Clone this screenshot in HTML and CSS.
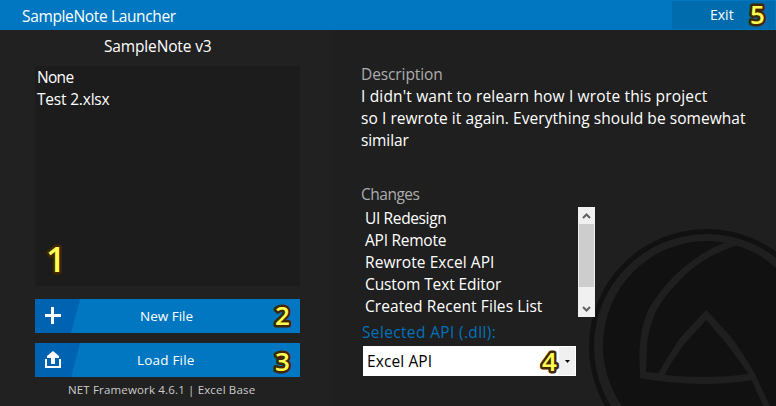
FILE: index.html
```html
<!DOCTYPE html>
<html lang="en">
<head>
<meta charset="utf-8">
<title>SampleNote Launcher</title>
<link rel="stylesheet" href="styles.css">
</head>
<body>
<div class="window">
  <header class="titlebar">
    <div class="title"><span class="t-title">SampleNote Launcher</span></div>
    <div class="exit"><span class="t-exit">Exit</span><svg class="mark mark5" width="24" height="32"><text x="3" y="24">5</text></svg></div>
  </header>
  <main class="body">
    <section class="left">
      <h1><span class="t-head">SampleNote v3</span></h1>
      <div class="files">
        <div><span class="t-none">None</span></div>
        <div><span class="t-test">Test 2.xlsx</span></div>
        <svg class="mark mark1" width="24" height="32"><text x="3" y="24">1</text></svg>
      </div>
      <div class="button">
        <svg class="face" width="45" height="34" viewBox="0 0 45 34"><path fill="#0063b1" d="M0 0H45L36 34H0Z"/><path fill="#fff" d="M16 8h3v7h7v3h-7v7h-3v-7h-6v-3h6z"/></svg>
        <span class="t-new">New File</span>
        <svg class="mark mark2" width="24" height="32"><text x="3" y="24">2</text></svg>
      </div>
      <div class="button">
        <svg class="face" width="45" height="34" viewBox="0 0 45 34"><path fill="#0063b1" d="M0 0H45L36 34H0Z"/><path fill="#fff" d="M10 16h2v7h12v-7h2v9H10zM18 8l6 5v2h-4v6h-4v-6h-4v-2z"/></svg>
        <span class="t-load">Load File</span>
        <svg class="mark mark3" width="24" height="32"><text x="3" y="24">3</text></svg>
      </div>
      <footer><span class="t-foot">NET Framework 4.6.1 | Excel Base</span></footer>
    </section>
    <section class="right">
      <svg class="emblem" width="206" height="196" viewBox="0 0 618 588">
        <g fill="#111">
          <path fill-rule="evenodd" d="M57 410a353 353 0 1 0 706 0a353 353 0 1 0-706 0zM72 410a338 338 0 1 0 676 0a338 338 0 1 0-676 0z"/>
          <ellipse cx="410" cy="407" rx="311" ry="314"/>
        </g>
        <g fill="#1f1f1f">
          <path d="M465 97Q430 112 400 130Q335 170 290 222Q250 270 235 300Q210 355 208 430L210 505Q310 522 400 522Q480 522 545 511L580 588H600L555 492Q520 430 480 377L409 299L330 385Q300 428 265 490L228 486Q230 430 232 390Q240 345 260 300Q285 255 320 222Q355 180 400 152Q440 127 505 104L490 82zM283 495Q310 447 340 405L409 330L460 390Q503 443 535 492Q470 501 400 501Q340 501 283 495z"/>
        </g>
      </svg>
      <h2><span class="t-desc">Description</span></h2>
      <div class="description">
        <div><span class="t-d1">I didn't want to relearn how I wrote this project</span></div>
        <div><span class="t-d2">so I rewrote it again. Everything should be somewhat</span></div>
        <div><span class="t-d3">similar</span></div>
      </div>
      <h2><span class="t-chg">Changes</span></h2>
      <div class="changes">
        <div class="rows">
          <div><span class="t-c1">UI Redesign</span></div>
          <div><span class="t-c2">API Remote</span></div>
          <div><span class="t-c3">Rewrote Excel API</span></div>
          <div><span class="t-c4">Custom Text Editor</span></div>
          <div><span class="t-c5">Created Recent Files List</span></div>
        </div>
        <div class="scrollbar">
          <svg width="17" height="17"><path d="M5 11L8.5 7.5L12 11" fill="none" stroke="#606060" stroke-width="2"/></svg>
          <div class="thumb"></div>
          <svg width="17" height="17"><path d="M5 7L8.5 10.5L12 7" fill="none" stroke="#606060" stroke-width="2"/></svg>
        </div>
      </div>
      <div class="label"><span class="t-sel">Selected API (.dll):</span></div>
      <div class="select">
        <span class="t-api">Excel API</span>
        <div class="drop"><svg width="5" height="3"><path d="M0 0H5L2.5 3Z"/></svg></div>
        <svg class="mark mark4" width="24" height="32"><text x="3" y="24">4</text></svg>
      </div>
    </section>
  </main>
</div>
</body>
</html>
```
FILE: styles.css
```css
* { box-sizing: border-box; }
body { margin: 0; overflow: hidden; background: #1f1f1f; }
.window {
  width: 776px; height: 406px; display: flex; flex-direction: column;
  color: #fff; font: 15.5px/22px "Open Sans", "Noto Sans", sans-serif;
}
span { display: inline-block; white-space: nowrap; }
h1, h2 { margin: 0; font-size: inherit; font-weight: 400; }
.titlebar { height: 30px; flex: none; display: flex; justify-content: space-between; background: #0077c0; }
.title { padding: 5px 0 0 22px; }
.exit { position: relative; width: 103px; height: 28px; margin: 1px 1px 0 0; padding: 3px 0 0 38px; background: #006cae; font-size: 14px; }
.body { flex: 1; display: flex; min-height: 0; }
.left { width: 332px; padding: 5px 32px 0 35px; background: #212121; }
.left h1 { height: 31px; padding-left: 69px; }
.files { position: relative; height: 220px; padding: 0 0 0 2px; background: #1c1c1c; }
.button { position: relative; display: flex; align-items: center; height: 34px; margin-top: 13px; width: 265px; background: #0077c0; font-size: 13.5px; }
.button + .button { margin-top: 10px; }
.face { flex: none; }
.t-new { margin-left: 60px; }
.t-load { margin-left: 57px; letter-spacing: .2px; }
footer { padding: 2px 0 0 33px; font-size: 11.5px; color: #ccc; }
.right { position: relative; flex: 1; padding: 33px 0 0 29px; }
.emblem { position: absolute; right: 0; bottom: 0; }
.right h2 { position: relative; height: 22px; color: #adadad; }
.description { height: 98px; }
.changes { position: relative; display: flex; justify-content: space-between; width: 234px; height: 110px; margin-top: 2px; padding-left: 4px; }
.scrollbar { width: 17px; height: 110px; display: flex; flex-direction: column; background: #f0f0f0; }
.scrollbar svg { display: block; flex: none; }
.thumb { height: 63px; margin: 0 1px 13px; background: #cdcdcd; }
.label { height: 29px; padding: 4px 0 0 1px; color: #0072bc; }
.select { position: relative; width: 213px; height: 30px; margin-left: 2px; padding: 4px 1px 1px 4px; display: flex; justify-content: space-between; background: #fff; color: #000; }
.drop { width: 16px; height: 28px; margin-top: -3px; display: flex; align-items: center; justify-content: center; background: #f0f0f0; }
.t-title { letter-spacing: -.35px; }
.t-head { letter-spacing: -.15px; }
.t-none { letter-spacing: -.7px; }
.t-test { letter-spacing: -.2px; }
.t-desc { letter-spacing: -.1px; }
.t-d1 { letter-spacing: .16px; }
.t-d2 { letter-spacing: .06px; }
.t-d3 { letter-spacing: -.1px; }
.t-chg { letter-spacing: -.5px; }
.t-c1 { letter-spacing: -.36px; }
.t-c2 { letter-spacing: -.25px; }
.t-c3 { letter-spacing: .06px; }
.t-c4 { letter-spacing: -.1px; }
.t-c5 { letter-spacing: .08px; }
.t-sel { letter-spacing: .35px; }
.t-api { letter-spacing: .1px; }
.t-foot { letter-spacing: .16px; }
.mark { position: absolute; overflow: visible; }
.mark text { font: 600 26px "Open Sans", sans-serif; fill: #ffff54; stroke: #432600; stroke-width: 5px; stroke-linejoin: round; paint-order: stroke; }
.mark1 { left: 8px; top: 182px; }
.mark1 text { font-size: 34px; font-weight: 600; }
.mark2 { left: 237px; top: 2px; }
.mark3 { left: 237px; top: 4px; }
.mark4 { left: 176px; top: 1px; }
.mark5 { left: 75px; top: -1px; }
```
